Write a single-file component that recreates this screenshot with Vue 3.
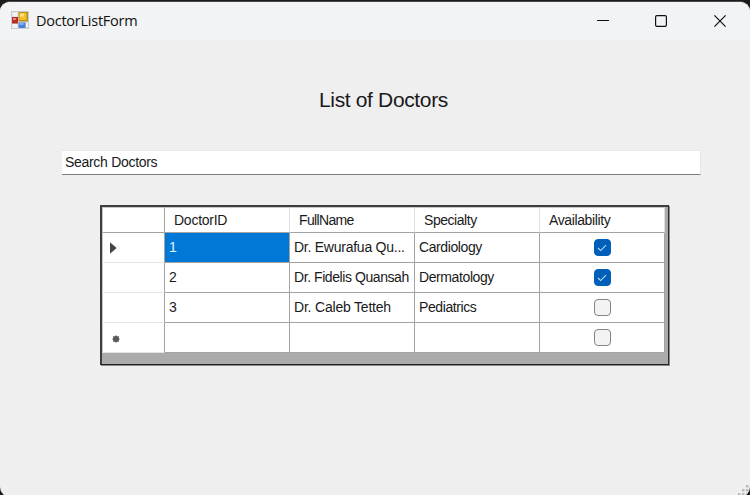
<script setup>
const columns = [
  { key: 'id', label: 'DoctorID', track: -0.25 },
  { key: 'name', label: 'FullName', track: -0.65 },
  { key: 'specialty', label: 'Specialty', track: -0.45 },
  { key: 'available', label: 'Availability', track: -0.38 },
]
const rows = [
  { id: '1', name: 'Dr. Ewurafua Qu...', specialty: 'Cardiology', available: true, marker: 'current', track: -0.25 },
  { id: '2', name: 'Dr. Fidelis Quansah', specialty: 'Dermatology', available: true, track: -0.43 },
  { id: '3', name: 'Dr. Caleb Tetteh', specialty: 'Pediatrics', available: false, track: -0.2 },
  { id: '', name: '', specialty: '', available: false, marker: 'new', track: 0 },
]
</script>

<template>
  <div class="desktop">
    <div class="window">
      <header class="titlebar">
        <svg class="app-icon" width="18" height="18" viewBox="0 0 18 18">
          <rect x="0.5" y="0.5" width="17" height="17" fill="#d8d8d8" stroke="#cccccc" />
          <rect x="1.5" y="1.5" width="5" height="4" fill="#f2f2f2" />
          <rect x="1.5" y="13" width="5" height="4" fill="#f2f2f2" />
          <rect x="15" y="12" width="2" height="4" fill="#f2f2f2" />
          <rect x="1" y="6" width="6" height="6.5" fill="#b82b24" />
          <rect x="2" y="7" width="3" height="2" fill="#dd8580" />
          <rect x="7.5" y="1" width="9.5" height="9.5" fill="#b98e1c" />
          <rect x="8.5" y="2" width="7" height="7" fill="#f0c030" />
          <rect x="9" y="2.5" width="4" height="3" fill="#fbe28a" />
          <rect x="7.5" y="11.5" width="7" height="5.5" fill="#4a80dc" />
          <rect x="8.5" y="12" width="4" height="2" fill="#85aff3" />
        </svg>
        <span class="caption">DoctorListForm</span>
        <div class="controls">
          <svg width="12" height="12" viewBox="0 0 12 12"><path d="M0 5.5H12" stroke="#111" /></svg>
          <svg width="12" height="12" viewBox="0 0 12 12"><rect x="0.6" y="0.6" width="10.8" height="10.8" rx="1.3" fill="none" stroke="#111" stroke-width="1.2" /></svg>
          <svg width="12" height="12" viewBox="0 0 12 12"><path d="M0.4 0.4L11.6 11.6M11.6 0.4L0.4 11.6" stroke="#111" stroke-width="1.2" /></svg>
        </div>
      </header>

      <main class="form">
        <h1>List of Doctors</h1>
        <div class="search">Search Doctors</div>

        <div class="grid">
          <div class="row head">
            <div class="marker"></div>
            <div v-for="c in columns" :key="c.key" class="cell">
              <span :style="{ letterSpacing: c.track + 'px' }">{{ c.label }}</span>
            </div>
          </div>
          <div v-for="(r, i) in rows" :key="i" class="row">
            <div class="marker">
              <svg v-if="r.marker === 'current'" width="8" height="12" viewBox="0 0 8 12"><path d="M0 0.2L6.6 6L0 11.8Z" fill="#444" /></svg>
              <svg v-if="r.marker === 'new'" class="star" width="8" height="8" viewBox="0 0 8 8">
                <circle cx="4" cy="4" r="3" fill="#4a4a4a" />
                <path d="M4 0.3V7.7M0.3 4H7.7M1.2 1.2L6.8 6.8M6.8 1.2L1.2 6.8" stroke="#5c5c5c" stroke-width="1" />
              </svg>
            </div>
            <div class="cell" :class="{ selected: i === 0 }">{{ r.id }}</div>
            <div class="cell" :style="{ letterSpacing: r.track + 'px' }">{{ r.name }}</div>
            <div class="cell specialty">{{ r.specialty }}</div>
            <div class="cell check">
              <span class="box" :class="{ on: r.available }">
                <svg v-if="r.available" width="10" height="8" viewBox="0 0 10 8"><path d="M1 4L3.7 6.6L9 1.2" fill="none" stroke="#b9dcf8" stroke-width="1.1" /></svg>
              </span>
            </div>
          </div>
        </div>
      </main>

      <svg class="grip" width="12" height="11" viewBox="0 0 12 11" fill="#bcbcbc">
        <rect x="8" y="0" width="2.5" height="2.5" />
        <rect x="4" y="4" width="2.5" height="2.5" /><rect x="8" y="4" width="2.5" height="2.5" />
        <rect x="0" y="8" width="2.5" height="2.5" /><rect x="4" y="8" width="2.5" height="2.5" /><rect x="8" y="8" width="2.5" height="2.5" />
      </svg>
    </div>
  </div>
</template>

<style>
body { margin: 0; overflow: hidden; }
</style>

<style scoped>
* { box-sizing: border-box; }
.desktop {
  width: 750px;
  height: 495px;
  padding-top: 1px;
  overflow: hidden;
  background: #1c1a1b;
  font-family: "Liberation Sans", Arial, sans-serif;
  color: #1a1a1a;
}
.window {
  position: relative;
  height: 496px;
  border-top: 1px solid #4a4748;
  border-radius: 10px;
  background: #efefef;
  overflow: hidden;
}
.titlebar {
  display: flex;
  align-items: center;
  height: 38px;
  padding: 0 24px 0 11px;
  background: #f1f3f4;
}
.app-icon { margin-top: -2px; }
.caption {
  margin-left: 7px;
  font: 14.5px/20px "Open Sans", sans-serif;
  letter-spacing: -0.25px;
  color: #111;
}
.controls {
  display: flex;
  gap: 47px;
  margin-left: auto;
}
.controls svg:first-child { margin-right: -1px; }
.form {
  display: flex;
  flex-direction: column;
  padding: 48px 49px 0 62px;
}
h1 {
  margin: 0;
  padding-left: 257px;
  font-size: 21px;
  font-weight: 400;
  line-height: 24px;
  letter-spacing: -0.35px;
}
.search {
  height: 25px;
  margin-top: 38px;
  padding-left: 3px;
  border: 1px solid #e8e8e8;
  border-bottom: 1px solid #7d7d7d;
  border-left: 0;
  background: #fff;
  font-size: 14px;
  line-height: 23px;
  letter-spacing: -0.3px;
}
.grid {
  width: 569px;
  height: 160px;
  margin: 30px 0 0 38px;
  border: 2px solid #3d3d3d;
  border-right: 1px solid #2c2c2c;
  border-bottom: 1px solid #222;
  box-shadow: 1px 1px 0 #8a8a8a;
  background: #ababab;
  font-size: 14px;
}
.row {
  display: grid;
  grid-template-columns: 63px 125px 125px 125px 125px;
  grid-template-rows: 100%;
  width: 563px;
  height: 30px;
}
.head { height: 26px; }
.marker {
  display: flex;
  align-items: center;
  padding: 0 0 0 7px;
  border-right: 1px solid #a3a3a3;
  border-bottom: 1px solid #e4e4e4;
  border-left: 1px solid #c8c8c8;
  background: #fff;
}
.star { margin: 2px 0 0 2px; }
.cell {
  min-height: 0;
  padding-left: 4px;
  border-right: 1px solid #a3a3a3;
  border-bottom: 1px solid #a3a3a3;
  background: #fff;
  line-height: 29px;
  letter-spacing: -0.3px;
  white-space: nowrap;
}
.specialty { letter-spacing: -0.4px; }
.head .cell, .head .marker { border-top: 1px solid #c8c8c8; border-bottom-color: #a3a3a3; }
.head .cell { padding-left: 9px; line-height: 24px; border-right-color: #e0e0e0; }
.selected { background: #0078d7; color: #e8f3fc; }
.check {
  display: flex;
  align-items: center;
  justify-content: center;
  padding: 0;
}
.box {
  display: flex;
  align-items: center;
  justify-content: center;
  width: 17px;
  height: 17px;
  border: 1px solid #858585;
  border-radius: 4px;
  background: #f3f3f3;
}
.on { border-color: #005fb8; background: #005fb8; }
.grip {
  position: absolute;
  right: 0;
  bottom: 1px;
}
</style>
